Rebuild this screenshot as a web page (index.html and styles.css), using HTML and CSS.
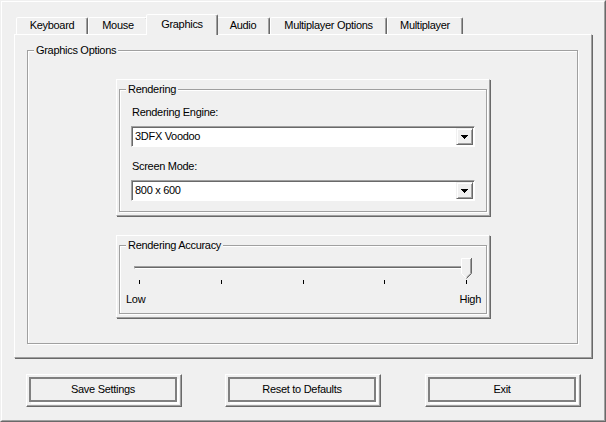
FILE: index.html
```html
<!DOCTYPE html>
<html lang="en">
<head>
    <meta charset="UTF-8">
    <title>Game Setup</title>
    <link rel="stylesheet" href="styles.css">
</head>
<body>
    <div class="window">
        <div class="frame">
            <div class="tabs">
                <div class="tab">Keyboard</div>
                <div class="tab">Mouse</div>
                <div class="tab selected">Graphics</div>
                <div class="tab">Audio</div>
                <div class="tab">Multiplayer Options</div>
                <div class="tab">Multiplayer</div>
            </div>

            <div class="panel">
                <fieldset class="group outer">
                    <legend>Graphics Options</legend>

                    <div class="card">
                        <fieldset class="group rendering">
                            <legend>Rendering</legend>
                            <label class="field-label">Rendering Engine:</label>
                            <div class="combo">
                                <span class="combo-value">3DFX Voodoo</span>
                                <span class="combo-btn">
                                    <svg width="7" height="4" viewBox="0 0 7 4"><path d="M0 0h7v1H0zM1 1h5v1H1zM2 2h3v1H2zM3 3h1v1H3z" fill="#000"/></svg>
                                </span>
                            </div>
                            <label class="field-label second">Screen Mode:</label>
                            <div class="combo">
                                <span class="combo-value">800 x 600</span>
                                <span class="combo-btn">
                                    <svg width="7" height="4" viewBox="0 0 7 4"><path d="M0 0h7v1H0zM1 1h5v1H1zM2 2h3v1H2zM3 3h1v1H3z" fill="#000"/></svg>
                                </span>
                            </div>
                        </fieldset>
                    </div>

                    <div class="card second-card">
                        <fieldset class="group accuracy">
                            <legend>Rendering Accuracy</legend>
                            <div class="slider">
                                <div class="channel"></div>
                                <!-- thumb sits over the channel at the "High" end -->
                                <svg class="thumb" width="11" height="22" viewBox="0 0 11 22">
                                    <path d="M0.5 0.5H10.5V15.5L5.5 20.5L0.5 15.5Z" fill="#f0f0f0"/>
                                    <path d="M0.5 15.5V0.5H10" fill="none" stroke="#fff"/>
                                    <path d="M0.5 15.5L5 20" fill="none" stroke="#fff"/>
                                    <path d="M9.5 1V15.3L5.5 19.3" fill="none" stroke="#a0a0a0"/>
                                    <path d="M10.5 0V15.5L5.5 20.5" fill="none" stroke="#696969"/>
                                </svg>
                                <div class="ticks">
                                    <span class="tick"></span>
                                    <span class="tick"></span>
                                    <span class="tick"></span>
                                    <span class="tick"></span>
                                    <span class="tick"></span>
                                </div>
                                <div class="scale-labels">
                                    <span>Low</span>
                                    <span>High</span>
                                </div>
                            </div>
                        </fieldset>
                    </div>
                </fieldset>
            </div>

            <div class="buttons">
                <button class="btn"><span class="btn-face">Save Settings</span></button>
                <button class="btn"><span class="btn-face">Reset to Defaults</span></button>
                <button class="btn"><span class="btn-face">Exit</span></button>
            </div>
        </div>
    </div>
</body>
</html>
```

FILE: styles.css
```css
* { box-sizing: border-box; }

body {
    margin: 0;
    background: #f0f0f0;
    font: 11px/13px "Liberation Sans", Arial, sans-serif;
    letter-spacing: -0.3px;
    color: #000;
}

/* raised window edge */
.window {
    width: 606px;
    height: 422px;
    border: 1px solid;
    border-color: #f0f0f0 #696969 #696969 #f0f0f0;
}
.frame {
    height: 100%;
    border: 1px solid;
    border-color: #fff #a0a0a0 #a0a0a0 #fff;
    padding: 12px 0 0 12px;
}

/* tab strip */
.tabs {
    display: grid;
    grid-template-columns: 72px 60px 68px 54px 117px 76px;
    align-items: end;
    height: 20px;
    padding-left: 2px;
}
.tab {
    height: 17px;
    padding-top: 1px;
    border: 1px solid;
    border-bottom: 0;
    border-color: #fff #696969 transparent #fff;
    border-radius: 2px 2px 0 0;
    box-shadow: inset -1px 0 0 #a0a0a0;
    background: #f0f0f0;
    text-align: center;
    white-space: nowrap;
}
.tab.selected {
    position: relative;
    z-index: 1;
    height: 21px;
    padding-top: 3px;
    margin: 0 -2px -1px;
}

.panel {
    width: 578px;
    height: 324px;
    border: 1px solid;
    border-color: #fff #a0a0a0 #a0a0a0 #fff;
    box-shadow: 1px 1px 0 #696969;
    padding: 9px 0 0 12px;
}

/* etched group box; the legend starts at the content edge, so
   horizontal spacing goes on the children instead */
.group {
    margin: 0;
    min-width: 0;
    padding: 0;
    border: 1px solid #a0a0a0;
    box-shadow: inset 1px 1px 0 #fff, 1px 1px 0 #fff;
}
.group legend {
    margin-left: 6px;
    padding: 0 2px;
    background: #f0f0f0;
}
.group.outer {
    width: 551px;
    padding: 22px 0 25px;
}

.card {
    width: 374px;
    margin-left: 88px;
    border: 1px solid;
    border-color: #fff #a0a0a0 #a0a0a0 #fff;
    box-shadow: 1px 1px 0 #696969;
    padding: 3px 2px 3px;
}
.second-card { margin-top: 19px; }

.rendering { padding: 10px 0; }
.field-label {
    display: block;
    margin: 0 11px;
    padding-left: 1px;
}
.field-label.second { margin-top: 13px; }

.combo {
    display: flex;
    height: 21px;
    margin: 7px 11px 0;
    padding: 1px;
    border: 1px solid;
    border-color: #a0a0a0 #fff #fff #a0a0a0;
    box-shadow: inset 1px 1px 0 #696969;
    background: #fff;
}
.combo-value {
    flex: 1;
    padding: 2px 0 0 2px;
}
.combo-btn {
    display: flex;
    align-items: center;
    justify-content: center;
    width: 17px;
    border: 1px solid;
    border-color: #f0f0f0 #696969 #696969 #f0f0f0;
    box-shadow: inset 1px 1px 0 #fff, inset -1px -1px 0 #a0a0a0;
    background: #f0f0f0;
}

/* trackbar */
.accuracy { padding: 0 0 7px; }
.slider {
    position: relative;
    margin: 0 5px 0 6px;
    padding-top: 14px;
}
.channel {
    height: 3px;
    margin: 0 9px 0 8px;
    border: 1px solid;
    border-color: #a0a0a0 #fff #fff #a0a0a0;
    background: #696969;
}
.thumb {
    position: absolute;
    left: 335px;
    top: 6px;
}
.ticks {
    display: flex;
    justify-content: space-between;
    margin: 11px 14px 0 13px;
}
.tick {
    width: 1px;
    height: 4px;
    background: #000;
}
.scale-labels {
    display: flex;
    justify-content: space-between;
    margin-top: 9px;
}

/* bottom buttons */
.buttons {
    display: flex;
    gap: 43px;
    margin-top: 16px;
    padding-left: 12px;
}
.btn {
    width: 156px;
    height: 33px;
    padding: 2px 4px 4px 2px;
    border: 1px solid;
    border-color: #fff #696969 #696969 #fff;
    box-shadow: inset -1px -1px 0 #a0a0a0;
    background: #f0f0f0;
    font: inherit;
    letter-spacing: inherit;
    color: #000;
}
.btn:last-child { margin-left: 1px; }
.btn-face {
    display: block;
    height: 100%;
    border: 2px solid #808080;
    box-shadow: 2px 2px 0 #fff;
    line-height: 21px;
    text-align: center;
}
```
